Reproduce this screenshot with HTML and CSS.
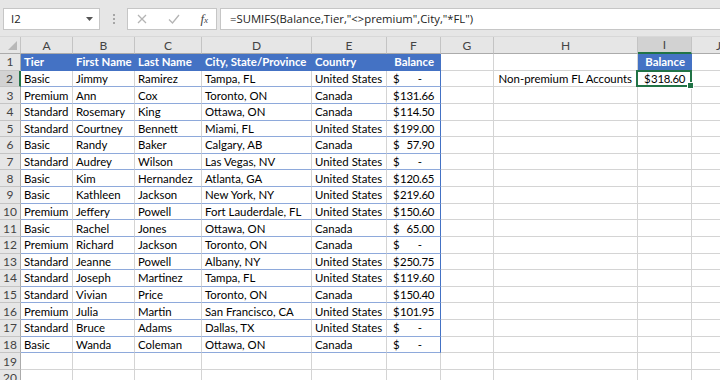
FILE: index.html
```html
<!DOCTYPE html>
<html lang="en">
<head>
  <meta charset="UTF-8" />
  <title>SUMIFS - Non-premium FL Accounts</title>
  <link rel="stylesheet" href="styles.css">
</head>
<body>
  <!-- formula bar -->
  <div class="toolbar">
    <div class="namebox">
      <span>I2</span>
      <svg class="caret" width="7" height="4" viewBox="0 0 7 4"><path d="M0 0h7L3.5 4z" fill="#555"/></svg>
    </div>
    <div class="grip"><i></i><i></i><i></i></div>
    <div class="fxbox">
      <svg width="10" height="10" viewBox="0 0 10 10"><path d="M1 1l8 8M9 1l-8 8" stroke="#b4b4b4" stroke-width="1.3" fill="none"/></svg>
      <svg width="12" height="10" viewBox="0 0 12 10"><path d="M1 5.5l3.5 3.5L11 1" stroke="#b4b4b4" stroke-width="1.3" fill="none"/></svg>
      <span class="fx">f<small>x</small></span>
    </div>
    <div class="formula">=SUMIFS(Balance,Tier,"&lt;&gt;premium",City,"*FL")</div>
  </div>

  <div id="sheet" class="sheet"></div>

  <script>
    const LETTERS = ['', 'A', 'B', 'C', 'D', 'E', 'F', 'G', 'H', 'I', 'J'];
    const HEAD = ['Tier', 'First Name', 'Last Name', 'City, State/Province', 'Country', 'Balance'];
    const ROWS = [
      ['Basic',    'Jimmy',    'Ramirez',   'Tampa, FL',           'United States', 0],
      ['Premium',  'Ann',      'Cox',       'Toronto, ON',         'Canada',        131.66],
      ['Standard', 'Rosemary', 'King',      'Ottawa, ON',          'Canada',        114.5],
      ['Standard', 'Courtney', 'Bennett',   'Miami, FL',           'United States', 199],
      ['Basic',    'Randy',    'Baker',     'Calgary, AB',         'Canada',        57.9],
      ['Standard', 'Audrey',   'Wilson',    'Las Vegas, NV',       'United States', 0],
      ['Basic',    'Kim',      'Hernandez', 'Atlanta, GA',         'United States', 120.65],
      ['Basic',    'Kathleen', 'Jackson',   'New York, NY',        'United States', 219.6],
      ['Premium',  'Jeffery',  'Powell',    'Fort Lauderdale, FL', 'United States', 150.6],
      ['Basic',    'Rachel',   'Jones',     'Ottawa, ON',          'Canada',        65],
      ['Premium',  'Richard',  'Jackson',   'Toronto, ON',         'Canada',        0],
      ['Standard', 'Jeanne',   'Powell',    'Albany, NY',          'United States', 250.75],
      ['Standard', 'Joseph',   'Martinez',  'Tampa, FL',           'United States', 119.6],
      ['Standard', 'Vivian',   'Price',     'Toronto, ON',         'Canada',        150.4],
      ['Premium',  'Julia',    'Martin',    'San Francisco, CA',   'United States', 101.95],
      ['Standard', 'Bruce',    'Adams',     'Dallas, TX',          'United States', 0],
      ['Basic',    'Wanda',    'Coleman',   'Ottawa, ON',          'Canada',        0]
    ];

    const sheet = document.getElementById('sheet');
    const cell = (cls, html = '') => {
      const d = document.createElement('div');
      d.className = cls;
      d.innerHTML = html;
      sheet.appendChild(d);
      return d;
    };
    /* accounting format: "$" on the left, amount (or dash) on the right */
    const money = v => v === 0
      ? '<span>$</span><span class="dash">-</span>'
      : '<span>$</span><span class="amt">' + v.toFixed(2) + '</span>';

    /* column headers */
    LETTERS.forEach((l, i) => cell(i === 0 ? 'hd corner' : (l === 'I' ? 'hd on' : 'hd'), l));

    for (let r = 1; r <= 20; r++) {
      cell(r === 2 ? 'rh on' : 'rh', r);
      for (let c = 0; c < 10; c++) {
        let cls = 'c', html = '';
        if (c < 6 && r <= 18) {
          cls += r === 1 ? ' th' : ' tb';
          if (c === 5) cls += ' num edge';
          if (r === 1) html = HEAD[c];
          else if (c === 5) html = money(ROWS[r - 2][5]);
          else html = ROWS[r - 2][c];
        }
        if (c === 7 && r === 2) { cls += ' label'; html = 'Non-premium FL Accounts'; }
        if (c === 8 && r === 1) { cls += ' th num'; html = 'Balance'; }
        if (c === 8 && r === 2) { cls += ' num sel'; html = money(318.6); }
        cell(cls, html);
      }
    }
  </script>
</body>
</html>
```

FILE: styles.css
```css
/* ========== sheet colours ========== */
:root {
  --chrome:  #e6e6e6;
  --header:  #e6e6e6;
  --line:    #d4d4d4;
  --hline:   #c4c4c4;
  --blue:    #4472c4;
  --band:    #8ea9db;
  --green:   #217346;
  --on:      #d2d2d2;
}

* { box-sizing: border-box; margin: 0; padding: 0; }
body {
  width: 720px;
  height: 380px;
  overflow: hidden;
  background: #fff;
  font-family: Lato, "Liberation Sans", sans-serif;
  color: #000;
}

/* ========== formula bar ========== */
.toolbar {
  height: 37px;
  background: var(--chrome);
  display: flex;
  align-items: center;
  padding: 1px 0 0 3px;
  border-bottom: 1px solid #d8d8d8;
  font-family: "Open Sans", sans-serif;
  font-size: 11.3px;
  color: #222;
}
.namebox, .fxbox, .formula {
  height: 22px;
  background: #fff;
  border: 1px solid #c6c6c6;
  display: flex;
  align-items: center;
}
.namebox {
  width: 97px;
  padding: 0 6px 0 7px;
  justify-content: space-between;
}
.grip {
  width: 27px;
  display: flex;
  flex-direction: column;
  align-items: center;
  gap: 2px;
}
.grip i { width: 2px; height: 2px; background: #a6a6a6; }
.fxbox {
  width: 90px;
  padding: 0 8px 0 9px;
  justify-content: space-between;
}
.fx {
  font-family: "Liberation Serif", serif;
  font-style: italic;
  font-size: 13px;
  color: #444;
}
.fx small { font-size: 9px; }
.formula {
  flex: 1;
  margin-left: 3px;
  padding-left: 9px;
  border-right: none;
}

/* ========== grid ========== */
.sheet {
  display: grid;
  grid-template-columns: 21px 52px 62px 67px 110px 75px 54px 53px 144px 54px 54px;
  grid-template-rows: 17px repeat(20, 16.63px);
  font-size: 11.4px;
}
.hd, .rh {
  background: var(--header);
  color: #444;
  font-size: 12px;
  display: flex;
  align-items: center;
  justify-content: center;
}
.hd {
  border-right: 1px solid var(--hline);
  border-bottom: 1px solid #ababab;
}
.hd.corner { position: relative; }
.hd.corner::after {
  content: "";
  position: absolute;
  right: 3px;
  bottom: 3px;
  border-left: 9px solid transparent;
  border-bottom: 9px solid #b8b8b8;
}
.rh {
  border-right: 1px solid #ababab;
  border-bottom: 1px solid var(--hline);
}
.hd.on { background: var(--on); border-bottom: 2px solid var(--green); }
.rh.on { background: var(--on); border-right: 2px solid var(--green); }

.c {
  border-right: 1px solid var(--line);
  border-bottom: 1px solid var(--line);
  padding: 0 2px 0 3px;
  display: flex;
  align-items: center;
  white-space: nowrap;
}
.th {
  background: var(--blue);
  color: #fff;
  font-weight: bold;
  border-bottom-color: var(--blue);
  border-right-color: var(--blue);
}
.tb { border-bottom-color: var(--band); }
.edge { border-right-color: var(--blue); }
.num { justify-content: space-between; padding: 0 6px 0 6px; }
.amt { letter-spacing: -0.3px; }
.th.num { justify-content: flex-end; }
.dash { padding-right: 12px; }
.label { justify-content: flex-end; padding-right: 5px; }

/* active cell */
.sel { position: relative; }
.sel::after {
  content: "";
  position: absolute;
  inset: -1px -1px -1px -2px;
  border: 2px solid var(--green);
}
.sel::before {
  content: "";
  position: absolute;
  right: -3px;
  bottom: -3px;
  width: 5px;
  height: 5px;
  background: var(--green);
  border: 1px solid #fff;
  z-index: 1;
}
```
